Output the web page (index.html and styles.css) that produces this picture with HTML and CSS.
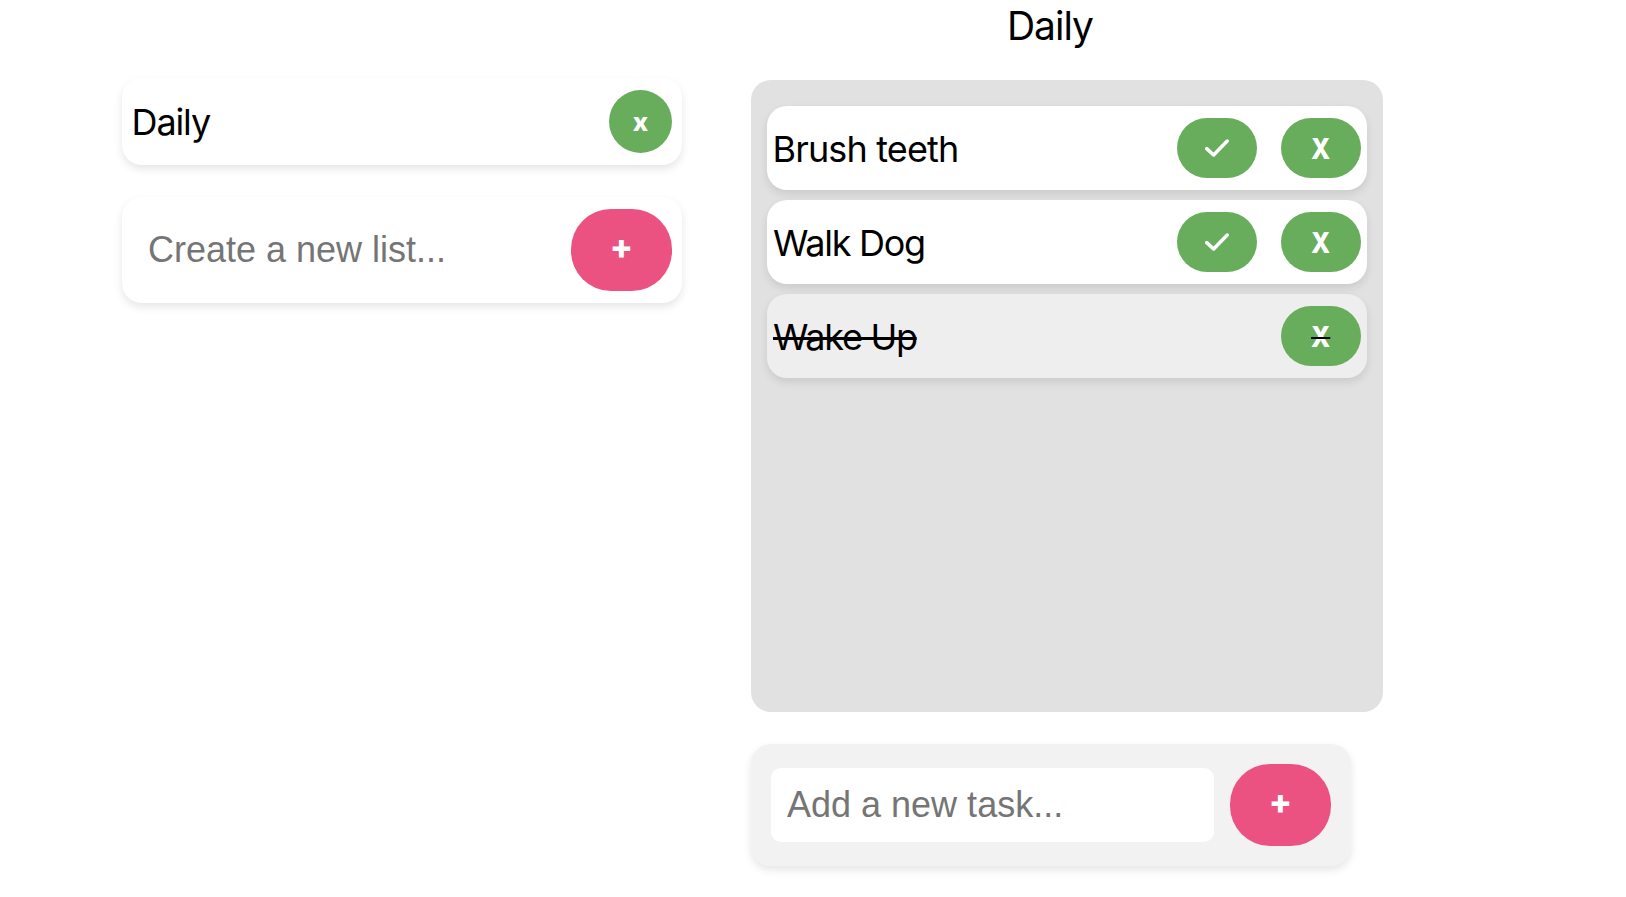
FILE: index.html
```html
<!DOCTYPE html>
<html lang="en">
<head>
<meta charset="utf-8">
<title>Task lists</title>
<link rel="stylesheet" href="styles.css">
</head>
<body>
<main class="app">
  <section class="lists">
    <div class="card list-row">
      <span class="list-name">Daily</span>
      <button class="btn btn-remove-list"><span class="glyph-x">x</span></button>
    </div>
    <form class="card list-form">
      <input class="field field-list" type="text" placeholder="Create a new list...">
      <button class="btn btn-add" type="button"><span class="glyph-plus">+</span></button>
    </form>
  </section>
  <section class="tasks">
    <h1 class="title">Daily</h1>
    <ul class="board">
      <li class="card task">
        <span class="task-name brush">Brush teeth</span>
        <button class="btn btn-task" aria-label="Complete"><svg class="check" viewBox="0 0 24 18"><path d="M1.7 9.6 L8.6 16 L22.2 2"/></svg></button>
        <button class="btn btn-task"><span class="glyph-big">X</span></button>
      </li>
      <li class="card task">
        <span class="task-name">Walk Dog</span>
        <button class="btn btn-task" aria-label="Complete"><svg class="check" viewBox="0 0 24 18"><path d="M1.7 9.6 L8.6 16 L22.2 2"/></svg></button>
        <button class="btn btn-task"><span class="glyph-big">X</span></button>
      </li>
      <li class="card task done">
        <span class="task-name wake">Wake Up</span>
        <button class="btn btn-task"><span class="glyph-big">X</span></button>
      </li>
    </ul>
    <form class="card task-form">
      <input class="field field-task" type="text" placeholder="Add a new task...">
      <button class="btn btn-add" type="button"><span class="glyph-plus">+</span></button>
    </form>
  </section>
</main>
</body>
</html>
```

FILE: styles.css
```css
* {
  box-sizing: border-box;
}

body {
  margin: 0;
  height: 897px;
  overflow: hidden;
  background: #fff;
  color: #000;
  font-family: Inter, sans-serif;
  font-size: 36px;
}

.app {
  display: flex;
  gap: 69px;
  padding-left: 122px;
}

.lists {
  display: flex;
  flex-direction: column;
  gap: 32px;
  width: 560px;
  padding-top: 78px;
}

.card {
  display: flex;
  align-items: center;
  background: #fff;
  border-radius: 20px;
  box-shadow: 0 4px 8px rgba(0, 0, 0, 0.1);
}

.list-row {
  height: 87px;
  padding: 0 10px;
}

.list-name {
  flex: 1;
  margin-left: -0.5px;
  letter-spacing: -1.1px;
}

.list-form {
  height: 106px;
  padding: 0 10px;
}

.field {
  flex: 1;
  min-width: 0;
  border: 0;
  outline: 0;
  padding: 0 16px;
  background: #fff;
  font: 36px "Liberation Sans", Arial, sans-serif;
}

.field::placeholder {
  color: #757575;
}

.field-task {
  height: 74px;
  border-radius: 10px;
}

.btn {
  display: flex;
  align-items: center;
  justify-content: center;
  flex: none;
  border: 0;
  padding: 0;
  background: #68ad5c;
  color: #fff;
  font-family: Inter, sans-serif;
  font-weight: 700;
}

.btn-remove-list {
  width: 63px;
  height: 63px;
  border-radius: 50%;
  font-size: 26px;
  font-weight: 800;
}

.glyph-x {
  padding-bottom: 1px;
}

.btn-add {
  width: 101px;
  height: 82px;
  border-radius: 40px;
  background: #eb5282;
  font-size: 34px;
  font-weight: 800;
}

.glyph-plus {
  padding-bottom: 7px;
}

.btn-task {
  width: 80px;
  height: 60px;
  border-radius: 30px;
  font-size: 28px;
  font-weight: 800;
}

.glyph-big {
  padding-top: 1px;
  transform: scaleX(0.9);
}

.check {
  width: 24px;
  height: 18px;
  fill: none;
  stroke: #fff;
  stroke-width: 3.5;
  stroke-linecap: round;
  stroke-linejoin: round;
}

.tasks {
  width: 632px;
}

.title {
  margin: 0;
  height: 80px;
  padding: 2px 34px 0 0;
  font-size: 39px;
  font-weight: 400;
  line-height: 48px;
  letter-spacing: -1px;
  text-align: center;
}

.board {
  display: flex;
  flex-direction: column;
  gap: 10px;
  height: 632px;
  margin: 0;
  padding: 26px 16px;
  border-radius: 20px;
  background: #e1e1e1;
  list-style: none;
}

.task {
  gap: 24px;
  height: 84px;
  padding: 0 6px;
}

.task-name {
  flex: 1;
  padding-top: 2px;
  letter-spacing: -1.3px;
}

.brush {
  margin-left: -0.5px;
  letter-spacing: -0.85px;
}

.done {
  background: #eee;
}

.done .task-name {
  flex: none;
  margin-right: auto;
  text-decoration: line-through 3px;
}

.done .glyph-big {
  text-decoration: line-through 2px #000;
}

.task-form {
  gap: 16px;
  width: 600px;
  height: 122px;
  margin-top: 32px;
  padding: 0 20px;
  background: #f2f2f2;
}
```
